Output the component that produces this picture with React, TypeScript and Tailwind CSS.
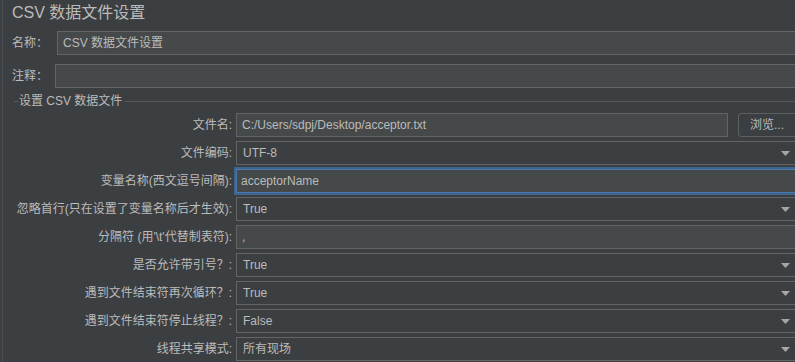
import React from "react";

type Row = {
  label: string;
  kind: "file" | "combo" | "focus" | "text";
  value: string;
};

const rows: Row[] = [
  { label: "文件名:", kind: "file", value: "C:/Users/sdpj/Desktop/acceptor.txt" },
  { label: "文件编码:", kind: "combo", value: "UTF-8" },
  { label: "变量名称(西文逗号间隔):", kind: "focus", value: "acceptorName" },
  { label: "忽略首行(只在设置了变量名称后才生效):", kind: "combo", value: "True" },
  { label: "分隔符 (用'\\t'代替制表符):", kind: "text", value: "," },
  { label: "是否允许带引号？:", kind: "combo", value: "True" },
  { label: "遇到文件结束符再次循环？:", kind: "combo", value: "True" },
  { label: "遇到文件结束符停止线程？:", kind: "combo", value: "False" },
  { label: "线程共享模式:", kind: "combo", value: "所有现场" },
];

const Arrow = () => (
  <svg width="9" height="5" viewBox="0 0 9 5" className="shrink-0">
    <path d="M0 0h9L4.5 5z" fill="#a6a6a6" />
  </svg>
);

const Field = ({ row }: { row: Row }) => {
  if (row.kind === "combo") {
    return (
      <div className="h-full flex items-center border border-[#646464] bg-[#3c3f41] pl-[6px] pr-[9px]">
        <span className="flex-1 truncate">{row.value}</span>
        <Arrow />
      </div>
    );
  }
  if (row.kind === "file") {
    return (
      <div className="h-full flex">
        <div className="flex-1 flex items-center border border-[#646464] bg-[#45494a] pl-[5px]">
          {row.value}
        </div>
        <button
          type="button"
          className="w-[62px] ml-[10px] text-left pl-[11px] border border-[#5e6060] rounded-[3px] bg-[#3c3f41] text-[#bbbbbb]"
        >
          浏览...
        </button>
      </div>
    );
  }
  if (row.kind === "focus") {
    return (
      <div className="h-full flex items-center border border-[#4a78a8] shadow-[0_0_0_2px_#3d6590] bg-[#45494a] pl-[4px]">
        {row.value}
      </div>
    );
  }
  return (
    <div className="h-full flex items-center border border-[#646464] bg-[#45494a] pl-[5px]">
      {row.value}
    </div>
  );
};

export default function App() {
  return (
    <div className="w-[795px] h-[362px] overflow-hidden bg-[#3c3f41] text-[#bbbbbb] text-[12px] font-['Liberation_Sans','Noto_Sans_CJK_SC',sans-serif]">
      <div className="w-[798px] h-full ml-[2px] border-l border-[#4a4d4f]">
        <div className="h-[25px] leading-[25px] pl-[9px] text-[16px]">CSV 数据文件设置</div>

        <div className="mt-[6px] h-[24px] flex items-center pl-[9px]">
          <span className="w-[45px] shrink-0">名称：</span>
          <div className="flex-1 h-full flex items-center border border-[#646464] bg-[#45494a] pl-[5px]">
            CSV 数据文件设置
          </div>
        </div>

        <div className="mt-[9px] h-[24px] flex items-center pl-[9px]">
          <span className="w-[43px] shrink-0">注释：</span>
          <div className="flex-1 h-full border border-[#646464] bg-[#45494a]" />
        </div>

        <div className="mt-[1px] h-[24px] flex items-center pl-[11px]">
          <div className="w-[4px] h-px bg-[#5a5d5f]" />
          <span className="ml-[1px]">设置 CSV 数据文件</span>
          <div className="flex-1 h-px bg-[#555759] ml-[3px]" />
        </div>

        <div className="grid grid-cols-[229px_1fr] gap-x-[4px] gap-y-[4px]">
          {rows.map((row) => (
            <React.Fragment key={row.label}>
              <div className="h-[24px] flex items-center justify-end whitespace-nowrap">{row.label}</div>
              <div className="h-[24px]">
                <Field row={row} />
              </div>
            </React.Fragment>
          ))}
        </div>
      </div>
    </div>
  );
}
